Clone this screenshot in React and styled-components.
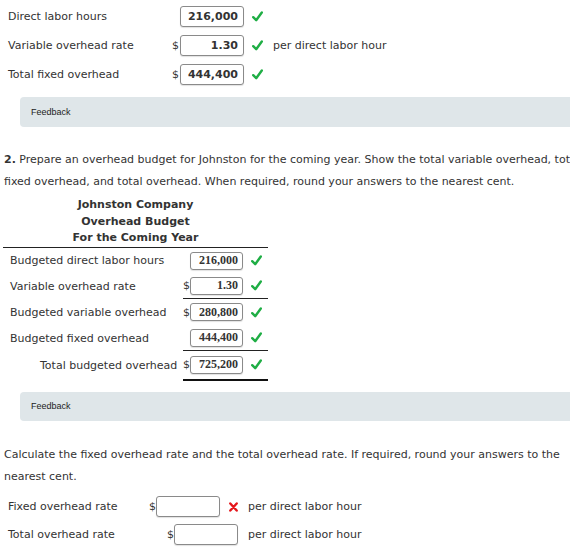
import React from "react";
import styled, { createGlobalStyle } from "styled-components";

const Global = createGlobalStyle`
  html, body { margin: 0; padding: 0; background: #fff; overflow: hidden; }
  body { font-family: "DejaVu Sans", Verdana, sans-serif; color: #333; }
`;

const Page = styled.div`
  width: 590px;
  padding-top: 2px;
`;

const AnswerRow = styled.div`
  display: grid;
  grid-template-columns: 164px 8px 64px 29px auto;
  height: 29px;
  align-items: center;
  padding-left: 8px;
  font-size: 11px;
`;

const Label = styled.span`
  font-size: 11px;
  color: #333;
  white-space: nowrap;
`;

const Dollar = styled.span`
  font-size: 11px;
  color: #333;
  line-height: 1;
`;

const Box = styled.div`
  box-sizing: border-box;
  width: ${(p) => p.$w || 64}px;
  height: ${(p) => p.$h || 21}px;
  border: 1px solid #8a8a8a;
  border-radius: 3px;
  box-shadow: 0 1px 1px rgba(0, 0, 0, 0.12);
  background: #fff;
  display: flex;
  align-items: center;
  justify-content: flex-end;
  padding-right: 5px;
  font-weight: bold;
  font-size: 11px;
  color: #333;
  font-family: ${(p) =>
    p.$serif ? '"Liberation Serif", "Times New Roman", serif' : '"DejaVu Sans", Verdana, sans-serif'};
  ${(p) => p.$serif && "font-size: 12px; padding-right: 4px;"}
`;

const Mark = styled.span`
  display: flex;
  align-items: center;
  padding-left: ${(p) => p.$pad ?? 8}px;
`;

const Suffix = styled.span`
  font-size: 11px;
  color: #333;
  white-space: nowrap;
  padding-left: ${(p) => p.$pad || 0}px;
`;

const Feedback = styled.div`
  box-sizing: border-box;
  margin: ${(p) => p.$mt}px 0 0 20px;
  height: ${(p) => p.$h}px;
  background: #dfe6e9;
  border-radius: 4px 0 0 4px;
  display: flex;
  align-items: center;
  padding-left: 11px;
  font-family: "Liberation Sans", Arial, sans-serif;
  font-size: 9px;
  color: #222;
`;

const Para = styled.p`
  margin: ${(p) => p.$mt}px 0 0 4px;
  font-size: 11px;
  line-height: 22px;
  color: #333;
  width: 580px;
`;

const Budget = styled.div`
  margin: 3px 0 0 3px;
  width: 265px;
`;

const Title = styled.div`
  text-align: center;
  font-weight: bold;
  font-size: 11px;
  line-height: 16.5px;
  padding-top: 1px;
  color: #333;
  border-bottom: 1px solid #222;
`;

const BRow = styled.div`
  display: grid;
  grid-template-columns: 180px 7px 55px 23px;
  height: ${(p) => p.$h}px;
`;

const BLabel = styled.div`
  display: flex;
  align-items: center;
  padding-left: ${(p) => (p.$total ? 37 : 7)}px;
  font-size: 11px;
  color: #333;
  white-space: nowrap;
`;

const BCell = styled.div`
  display: flex;
  align-items: center;
  justify-content: ${(p) => p.$justify || "flex-start"};
  border-bottom: ${(p) =>
    p.$rule === "double" ? "2px solid #111" : p.$rule === "single" ? "1px solid #222" : "none"};
  box-sizing: border-box;
`;

const RateRow = styled.div`
  display: grid;
  grid-template-columns: 130px 100px auto;
  height: 28px;
  align-items: center;
  padding-left: 8px;
`;

const RateCell = styled.div`
  display: flex;
  align-items: center;
  justify-content: flex-end;
`;

const Spacer = styled.div`
  height: ${(p) => p.$h}px;
`;

const Check = () => (
  <svg width="11" height="11" viewBox="0 0 11 11">
    <path d="M1.2 6.2 L4.2 9.2 L9.8 1.5" fill="none" stroke="#1fae45" strokeWidth="2.4" strokeLinecap="round" strokeLinejoin="round" />
  </svg>
);

const Cross = () => (
  <svg width="9" height="10" viewBox="0 0 9 10">
    <path d="M1.3 1.5 L7.7 8.5 M7.7 1.5 L1.3 8.5" fill="none" stroke="#e5161b" strokeWidth="2.4" strokeLinecap="round" />
  </svg>
);

const topRows = [
  { label: "Direct labor hours", value: "216,000", dollar: false },
  { label: "Variable overhead rate", value: "1.30", dollar: true, suffix: "per direct labor hour" },
  { label: "Total fixed overhead", value: "444,400", dollar: true },
];

const budgetRows = [
  { label: "Budgeted direct labor hours", value: "216,000", h: 26 },
  { label: "Variable overhead rate", value: "1.30", dollar: true, rule: "single", h: 25 },
  { label: "Budgeted variable overhead", value: "280,800", dollar: true, h: 27 },
  { label: "Budgeted fixed overhead", value: "444,400", rule: "single", h: 25 },
  { label: "Total budgeted overhead", value: "725,200", dollar: true, rule: "double", total: true, h: 30 },
];

export default function App() {
  return (
    <>
      <Global />
      <Page>
        {topRows.map((r) => (
          <AnswerRow key={r.label}>
            <Label>{r.label}</Label>
            <Dollar>{r.dollar ? "$" : ""}</Dollar>
            <Box>{r.value}</Box>
            <Mark>
              <Check />
            </Mark>
            <Suffix>{r.suffix || ""}</Suffix>
          </AnswerRow>
        ))}

        <Feedback $mt={8} $h={30}>Feedback</Feedback>

        <Para $mt={22}>
          <b>2.</b> Prepare an overhead budget for Johnston for the coming year. Show the total variable overhead, total
          fixed overhead, and total overhead. When required, round your answers to the nearest cent.
        </Para>

        <Budget>
          <Title>
            Johnston Company
            <br />
            Overhead Budget
            <br />
            For the Coming Year
          </Title>
          {budgetRows.map((r) => (
            <BRow key={r.label} $h={r.h}>
              <BLabel $total={r.total}>{r.label}</BLabel>
              <BCell $rule={r.rule}>
                <Dollar>{r.dollar ? "$" : ""}</Dollar>
              </BCell>
              <BCell $rule={r.rule}>
                <Box $serif $w={53} $h={18}>
                  {r.value}
                </Box>
              </BCell>
              <BCell $rule={r.rule} $justify="center">
                <Check />
              </BCell>
            </BRow>
          ))}
        </Budget>

        <Feedback $mt={11} $h={29}>Feedback</Feedback>

        <Para $mt={23}>
          Calculate the fixed overhead rate and the total overhead rate. If required, round your answers to the
          <br />
          nearest cent.
        </Para>

        <Spacer $h={5} />
        <RateRow>
          <Label>Fixed overhead rate</Label>
          <RateCell>
            <Dollar>$</Dollar>
            <Box />
            <Mark $pad={9}>
              <Cross />
            </Mark>
          </RateCell>
          <Suffix $pad={10}>per direct labor hour</Suffix>
        </RateRow>
        <RateRow>
          <Label>Total overhead rate</Label>
          <RateCell>
            <Dollar>$</Dollar>
            <Box />
          </RateCell>
          <Suffix $pad={10}>per direct labor hour</Suffix>
        </RateRow>
      </Page>
    </>
  );
}
